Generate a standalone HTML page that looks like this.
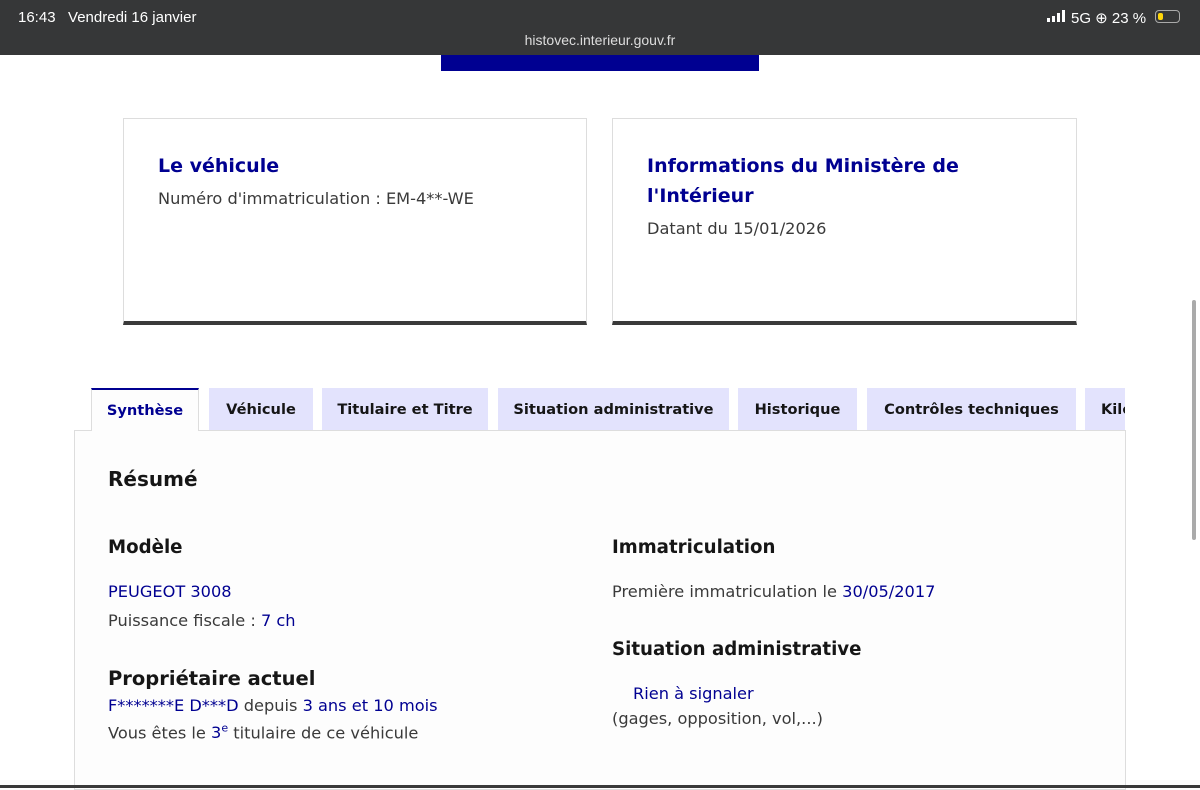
<!DOCTYPE html>
<html><head><meta charset="utf-8"><style>
*{margin:0;padding:0;box-sizing:border-box}
body{width:1200px;height:788px;overflow:hidden;background:#fff;font-family:"DejaVu Sans","Liberation Sans",sans-serif;position:relative;color:#3a3a3a}
.abs{position:absolute}
.bar{left:0;top:0;width:1200px;height:55px;background:#363738;color:#fff;font-family:"Liberation Sans",sans-serif}
.blue{color:#000091}
.card{border:1px solid #ddd;border-bottom:4px solid #3a3a3a;background:#fff}
.card h2{font-size:19px;color:#000091;font-weight:bold;line-height:30px}
.tab{top:388px;height:42px;background:#e3e3fd;font-size:14.6px;font-weight:bold;color:#161616;display:flex;align-items:center;justify-content:center;white-space:nowrap;overflow:hidden}
h3{font-size:18.2px;font-weight:bold;color:#161616}
.t{font-size:16.2px;white-space:nowrap}
</style></head><body>
<div class="abs bar">
 <div class="abs" style="left:18px;top:9px;font-size:15px">16:43&nbsp;&nbsp; Vendredi 16 janvier</div>
 <div class="abs" style="left:0;width:1200px;text-align:center;top:32px;font-size:14px;color:#ddd">histovec.interieur.gouv.fr</div>
 <div class="abs" style="left:1047px;top:10px;display:flex;align-items:flex-end;gap:2px"><i style="width:3px;height:4px;background:#fff"></i><i style="width:3px;height:6px;background:#fff"></i><i style="width:3px;height:9px;background:#fff"></i><i style="width:3px;height:12px;background:#fff"></i></div>
 <div class="abs" style="left:1071px;top:9px;font-size:15px">5G ⊕ 23 %</div>
 <div class="abs" style="left:1155px;top:10px;width:25px;height:13px;border:1.5px solid #aaa;border-radius:4px"><div style="margin:1.5px;width:5px;height:7px;background:#ffd60a;border-radius:2px"></div></div>
</div>
<div class="abs" style="left:441px;top:55px;width:318px;height:16px;background:#000091"></div>
<div class="abs card" style="left:123px;top:118px;width:464px;height:207px;padding:32px 34px">
 <h2>Le véhicule</h2><div class="t" style="margin-top:8px">Numéro d'immatriculation : EM-4**-WE</div>
</div>
<div class="abs card" style="left:612px;top:118px;width:465px;height:207px;padding:32px 34px">
 <h2>Informations du Ministère de<br>l'Intérieur</h2><div class="t" style="margin-top:8px">Datant du 15/01/2026</div>
</div>
<div class="abs" style="left:74px;top:430px;width:1052px;height:360px;border:1px solid #ddd;background:#fdfdfd"></div>
<div class="abs tab" style="left:91px;width:108px;height:43px;background:#fdfdfd;border-top:2px solid #000091;border-left:1px solid #ddd;border-right:1px solid #ddd;color:#000091">Synthèse</div>
<div class="abs tab" style="left:209px;width:104px">Véhicule</div>
<div class="abs tab" style="left:322px;width:166px">Titulaire et Titre</div>
<div class="abs tab" style="left:498px;width:231px">Situation administrative</div>
<div class="abs tab" style="left:738px;width:119px">Historique</div>
<div class="abs tab" style="left:867px;width:209px">Contrôles techniques</div>
<div class="abs tab" style="left:1085px;width:40px;justify-content:flex-start;padding-left:16px">Kilo</div>
<h3 class="abs" style="left:108px;top:467px;font-size:20px">Résumé</h3>
<h3 class="abs" style="left:108px;top:537px">Modèle</h3>
<div class="abs t blue" style="left:108px;top:582px">PEUGEOT 3008</div>
<div class="abs t" style="left:108px;top:611px">Puissance fiscale : <span class="blue">7 ch</span></div>
<h3 class="abs" style="left:108px;top:667px;font-size:19.5px">Propriétaire actuel</h3>
<div class="abs t" style="left:108px;top:696px"><span class="blue">F*******E D***D</span> depuis <span class="blue">3 ans et 10 mois</span></div>
<div class="abs t" style="left:108px;top:722px">Vous êtes le <span class="blue">3<sup style="font-size:11px">e</sup></span> titulaire de ce véhicule</div>
<h3 class="abs" style="left:612px;top:537px">Immatriculation</h3>
<div class="abs t" style="left:612px;top:582px">Première immatriculation le <span class="blue">30/05/2017</span></div>
<h3 class="abs" style="left:612px;top:639px">Situation administrative</h3>
<div class="abs t blue" style="left:633px;top:684px">Rien à signaler</div>
<div class="abs t" style="left:612px;top:709px">(gages, opposition, vol,...)</div>
<div class="abs" style="left:1192px;top:300px;width:4px;height:240px;background:#aaa;border-radius:2px"></div>
<div class="abs" style="left:0;top:785px;width:1200px;height:3px;background:#3a3a3a"></div>
</body></html>
